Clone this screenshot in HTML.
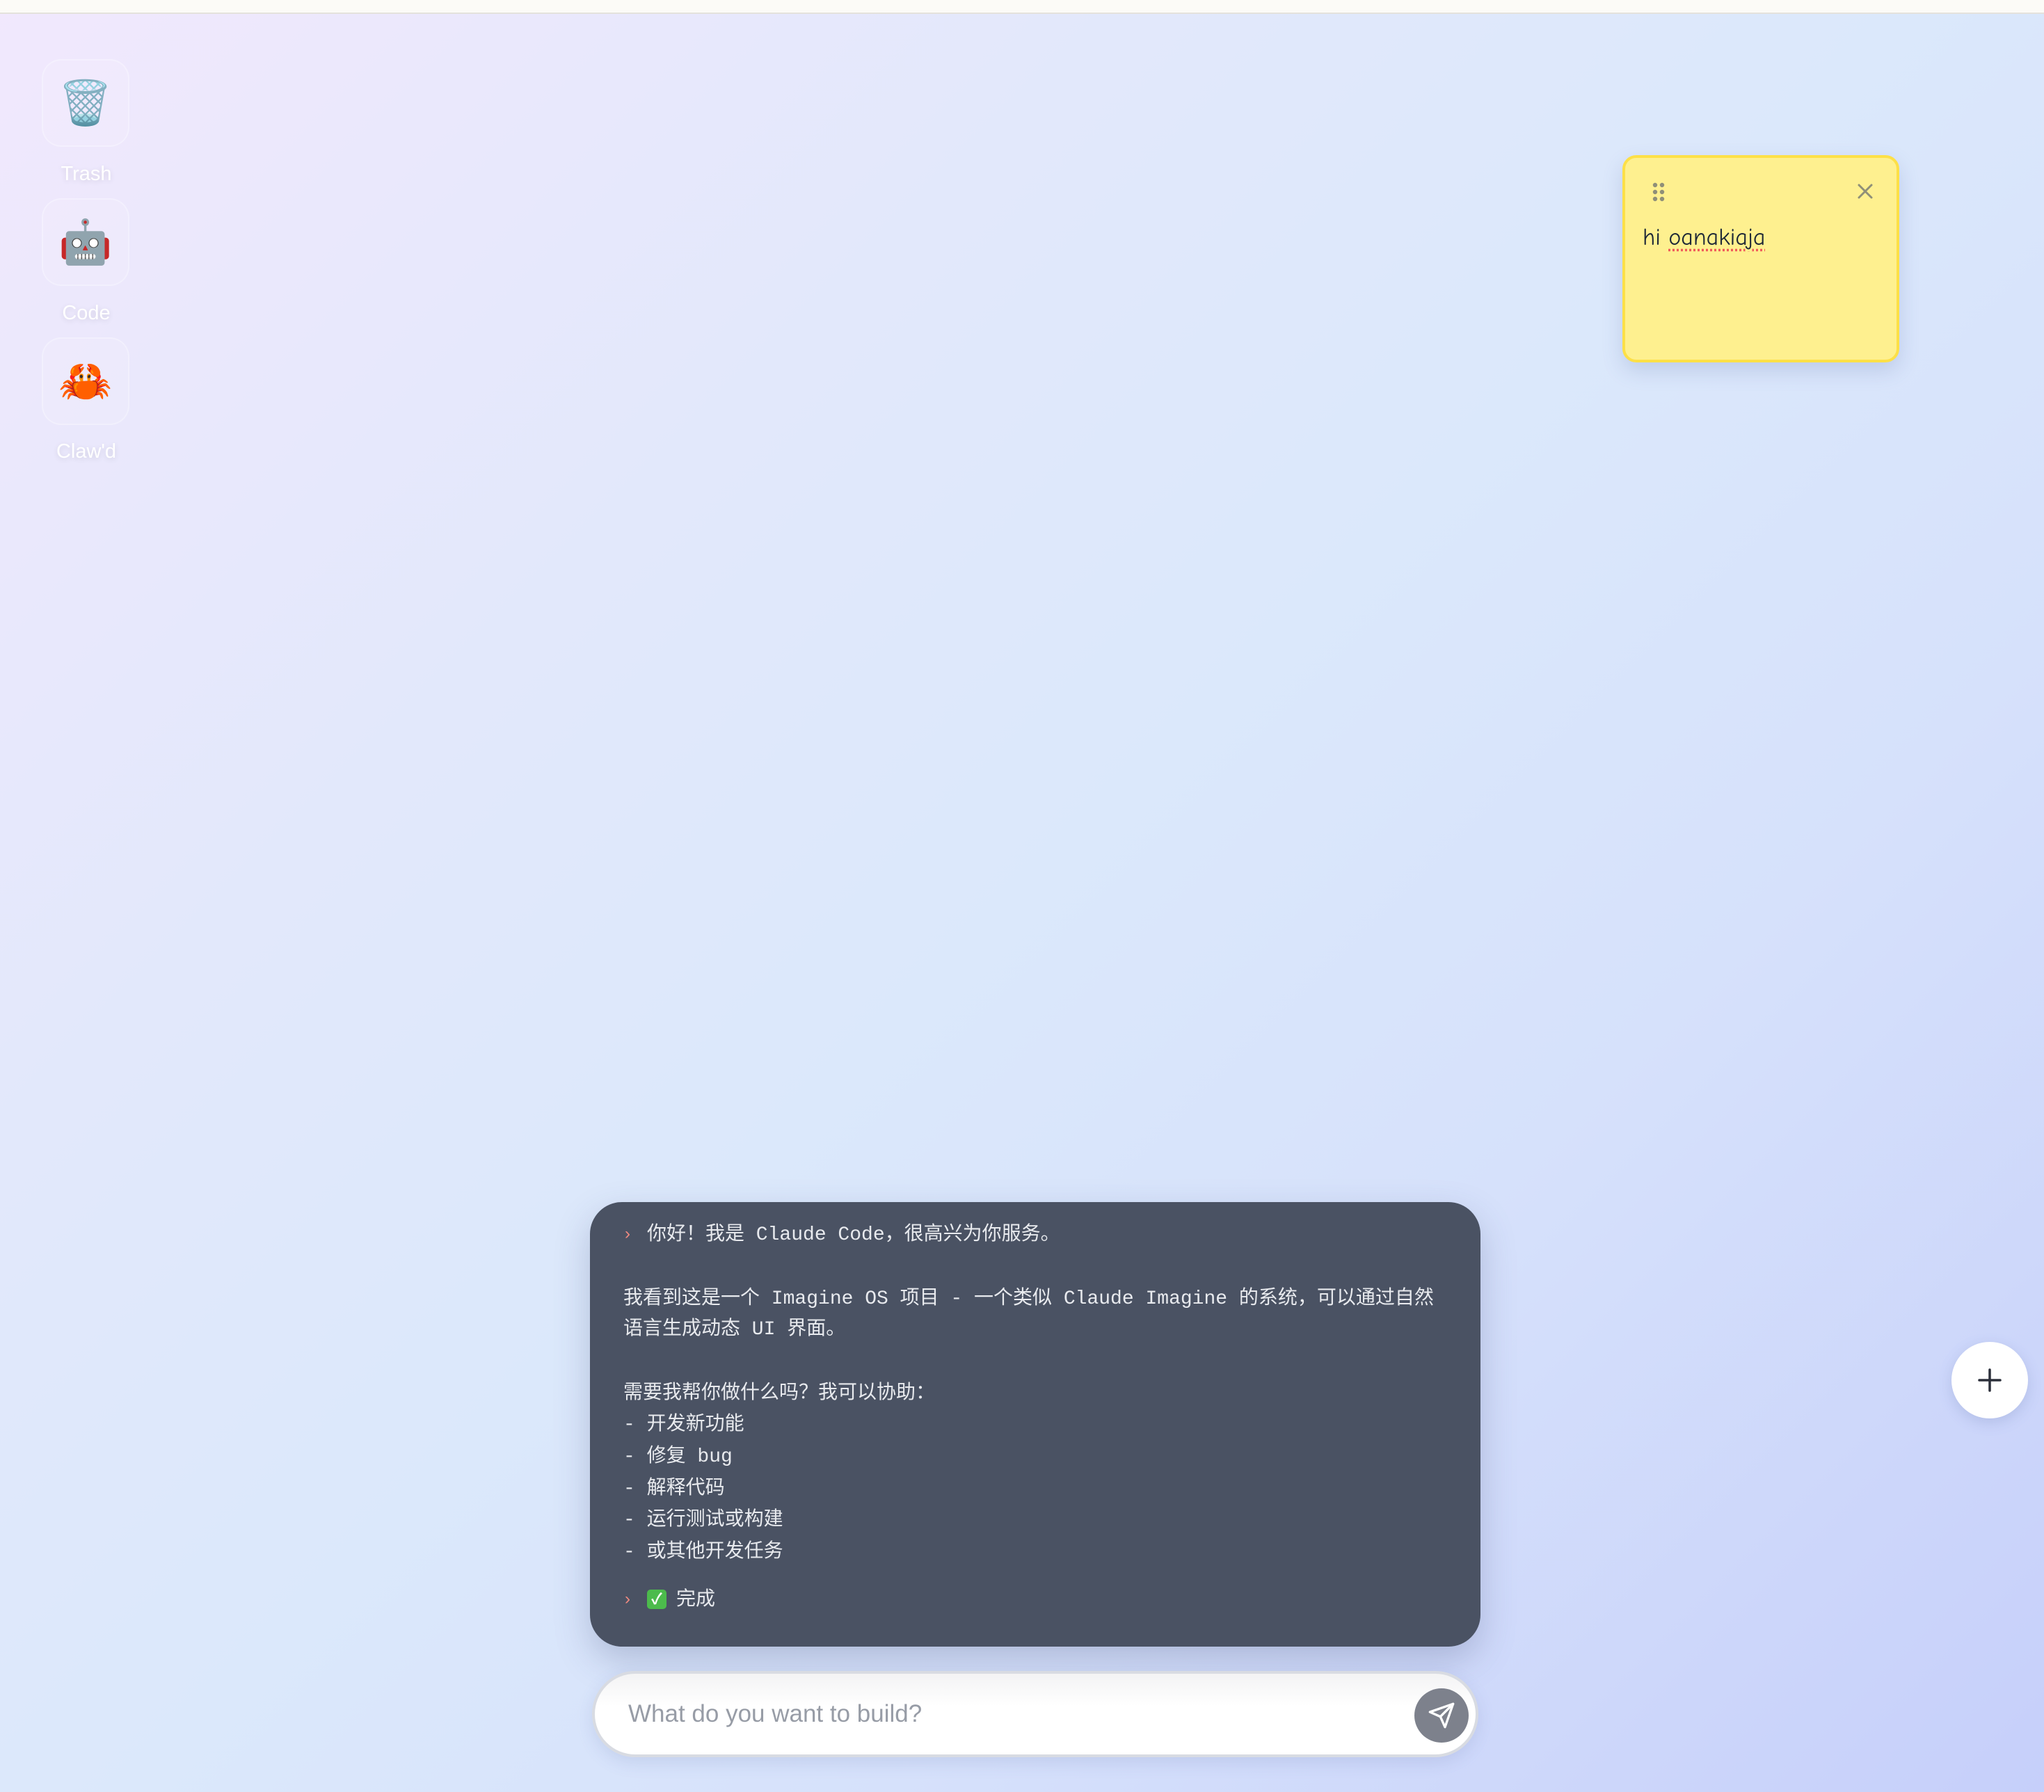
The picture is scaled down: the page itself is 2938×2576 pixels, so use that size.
<!DOCTYPE html>
<html><head><meta charset="utf-8">
<style>
html,body{margin:0;padding:0}
body{width:2938px;height:2576px;position:relative;overflow:hidden;
background:linear-gradient(135deg,#f1e8fd 0%,#e2e8fb 30%,#dbe8fb 50%,#d6e1fb 70%,#c6cffa 100%);
font-family:"Liberation Sans","Noto Sans CJK SC",sans-serif;}
.topbar{position:absolute;left:0;top:0;width:2938px;height:18px;background:#fcfbf7;border-bottom:2px solid #e4e2dc}
.ic{position:absolute;left:60px;width:126px;height:126px;border-radius:28px;background:rgba(255,255,255,0.12);border:2px solid rgba(255,255,255,0.25);box-sizing:border-box;display:flex;align-items:center;justify-content:center;font-size:62px;font-family:"Noto Color Emoji",sans-serif}
.lb{position:absolute;left:24px;width:200px;text-align:center;color:#fff;font-size:29px;text-shadow:0 2px 8px rgba(0,0,0,0.12)}
.sticky{position:absolute;left:2332px;top:223px;width:398px;height:298px;box-sizing:border-box;background:#fef08f;border:4px solid #fde047;border-radius:20px;box-shadow:0 12px 30px rgba(80,100,160,0.2)}
.chat{position:absolute;left:848px;top:1728px;width:1280px;height:639px;border-radius:46px;background:#4a5263;box-shadow:0 20px 50px rgba(60,70,120,0.25)}
.ln{position:absolute;left:48px;color:#e8eaee;font-family:"Liberation Mono","Noto Sans CJK SC",monospace;font-size:28px;line-height:40px;white-space:pre}
.chev{position:absolute;left:50px;color:#f08a80;font-size:24px;font-family:"Liberation Sans",sans-serif}
.input{position:absolute;left:851px;top:2402px;width:1274px;height:124px;box-sizing:border-box;border-radius:62px;border:4px solid #d8dbe2;background:linear-gradient(180deg,#f3f3f4 0%,#fff 40%,#fff 100%);box-shadow:0 8px 24px rgba(80,100,160,0.15)}
.ph{position:absolute;left:48px;top:38px;font-size:35px;color:#979ca6}
.send{position:absolute;left:1178px;top:21px;width:78px;height:78px;border-radius:50%;background:#7d818c}
.plus{position:absolute;left:2805px;top:1929px;width:110px;height:110px;border-radius:50%;background:#fff;box-shadow:0 6px 20px rgba(80,100,160,0.2)}
</style></head><body>
<div class="topbar"></div>

<div class="ic" style="top:85px">🗑️</div>
<div class="lb" style="top:234px">Trash</div>
<div class="ic" style="top:285px">🤖</div>
<div class="lb" style="top:434px">Code</div>
<div class="ic" style="top:485px">🦀</div>
<div class="lb" style="top:633px">Claw'd</div>

<div class="sticky">
<svg style="position:absolute;left:38px;top:34px" width="20" height="30" viewBox="0 0 20 30"><g fill="#8f8f78"><circle cx="5" cy="5" r="3.2"/><circle cx="15" cy="5" r="3.2"/><circle cx="5" cy="15" r="3.2"/><circle cx="15" cy="15" r="3.2"/><circle cx="5" cy="25" r="3.2"/><circle cx="15" cy="25" r="3.2"/></g></svg>
<svg style="position:absolute;left:333px;top:36px" width="24" height="24" viewBox="0 0 24 24"><path d="M3 3L21 21M21 3L3 21" stroke="#8f8f78" stroke-width="3" stroke-linecap="round"/></svg>
<div style="position:absolute;left:25px;top:94px;font-family:'Comic Sans MS','Comic Neue',cursive;font-size:34px;color:#1f2937">hi <span style="text-decoration:underline dotted #f05a5a;text-underline-offset:6px">oanakiaja</span></div>
</div>

<div class="chat">
<div class="chev" style="top:32px">›</div>
<div class="ln" style="left:82px;top:28px">你好！我是 Claude Code，很高兴为你服务。</div>
<div class="ln" style="top:120px">我看到这是一个 Imagine OS 项目 - 一个类似 Claude Imagine 的系统，可以通过自然</div>
<div class="ln" style="top:164px">语言生成动态 UI 界面。</div>
<div class="ln" style="top:256px">需要我帮你做什么吗？我可以协助：</div>
<div class="ln" style="top:301px">- 开发新功能</div>
<div class="ln" style="top:347px">- 修复 bug</div>
<div class="ln" style="top:393px">- 解释代码</div>
<div class="ln" style="top:438px">- 运行测试或构建</div>
<div class="ln" style="top:484px">- 或其他开发任务</div>
<div class="chev" style="top:557px">›</div>
<div style="position:absolute;left:82px;top:557px;width:28px;height:28px;border-radius:5px;background:#4cbb4c;color:#fff;font-size:22px;line-height:28px;text-align:center;font-weight:bold">✓</div>
<div class="ln" style="left:124px;top:553px">完成</div>
</div>

<div class="input">
<div class="ph">What do you want to build?</div>
<div class="send"><svg style="position:absolute;left:19px;top:19px" width="40" height="40" viewBox="0 0 24 24" fill="none" stroke="#fff" stroke-width="2" stroke-linejoin="round" stroke-linecap="round"><path d="M22 2L11 13"/><path d="M22 2L15 22L11 13L2 9Z"/></svg></div>
</div>

<div class="plus"><svg style="position:absolute;left:37px;top:37px" width="36" height="36" viewBox="0 0 36 36"><path d="M18 3V33M3 18H33" stroke="#2b2f3a" stroke-width="3.5" stroke-linecap="round"/></svg></div>
</body></html>
